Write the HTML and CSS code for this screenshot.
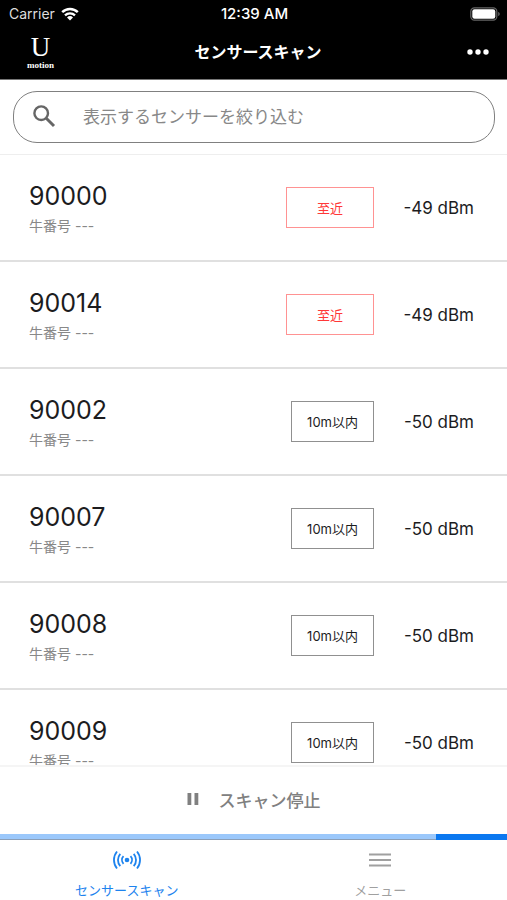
FILE: index.html
```html
<!DOCTYPE html>
<html lang="ja">
<head>
<meta charset="utf-8">
<meta name="viewport" content="width=device-width, initial-scale=1">
<title>センサースキャン</title>
<link rel="stylesheet" href="styles.css">
</head>
<body>
<div class="app">
  <header class="header">
    <div class="status">
      <div class="carrier">
        <span>Carrier</span>
        <svg class="wifi" viewBox="0 0 18 14" aria-hidden="true">
          <path d="M1.2 5.2a11.2 11.2 0 0 1 15.6 0" fill="none" stroke="currentColor" stroke-width="2.5"/>
          <path d="M4 8.3a7.2 7.2 0 0 1 10 0" fill="none" stroke="currentColor" stroke-width="2.3"/>
          <path d="M9 13.6 6 10.5a4.3 4.3 0 0 1 6 0z" fill="currentColor"/>
        </svg>
      </div>
      <span class="time">12:39 AM</span>
      <svg class="battery" viewBox="0 0 30 14" aria-hidden="true">
        <rect x=".8" y=".8" width="26" height="12.4" rx="3.6" fill="none" stroke="#666" stroke-width="1.2"/>
        <rect x="2.3" y="2.2" width="23" height="9.6" rx="2.2" fill="#fff"/>
        <path d="M28.2 5v4c1-.3 1.5-1 1.5-2s-.5-1.7-1.5-2z" fill="#666"/>
      </svg>
    </div>
    <div class="bar">
      <div class="logo"><span class="logo-mark">U</span><span class="logo-name">motion</span></div>
      <h1 class="title">センサースキャン</h1>
      <button class="more" type="button" aria-label="その他">
        <svg viewBox="0 0 22 6" aria-hidden="true"><circle cx="3" cy="3" r="2.7"/><circle cx="11" cy="3" r="2.7"/><circle cx="19" cy="3" r="2.7"/></svg>
      </button>
    </div>
  </header>

  <div class="search-area">
    <label class="search">
      <svg class="search-icon" viewBox="0 0 24 24" aria-hidden="true">
        <circle cx="8.2" cy="8.2" r="6.8" fill="none" stroke="currentColor" stroke-width="2.4"/>
        <path d="M13 13l8 8" stroke="currentColor" stroke-width="3"/>
      </svg>
      <input type="text" placeholder="表示するセンサーを絞り込む" aria-label="表示するセンサーを絞り込む">
    </label>
  </div>

  <ul class="list">
    <li class="row"><div class="sensor"><span class="id">90000</span><span class="cow">牛番号 ---</span></div><span class="range near">至近</span><span class="signal">-49 dBm</span></li>
    <li class="row"><div class="sensor"><span class="id">90014</span><span class="cow">牛番号 ---</span></div><span class="range near">至近</span><span class="signal">-49 dBm</span></li>
    <li class="row"><div class="sensor"><span class="id">90002</span><span class="cow">牛番号 ---</span></div><span class="range">10m以内</span><span class="signal">-50 dBm</span></li>
    <li class="row"><div class="sensor"><span class="id">90007</span><span class="cow">牛番号 ---</span></div><span class="range">10m以内</span><span class="signal">-50 dBm</span></li>
    <li class="row"><div class="sensor"><span class="id">90008</span><span class="cow">牛番号 ---</span></div><span class="range">10m以内</span><span class="signal">-50 dBm</span></li>
    <li class="row"><div class="sensor"><span class="id">90009</span><span class="cow">牛番号 ---</span></div><span class="range">10m以内</span><span class="signal">-50 dBm</span></li>
  </ul>

  <button class="scan" type="button">
    <svg class="pause" viewBox="0 0 12 12" aria-hidden="true"><path d="M.5 0h3.8v12H.5zM7.500 0h3.800v12H7.500z"/></svg>
    <span>スキャン停止</span>
  </button>
  <div class="progress"><div class="progress-value"></div></div>

  <nav class="tabs">
    <a class="tab active" href="#scan" aria-current="page">
      <svg class="tab-icon" viewBox="0 0 28 20" fill="none" stroke="currentColor" stroke-width="1.8" aria-hidden="true">
        <circle cx="14" cy="10" r="2.3" fill="currentColor" stroke="none"/>
        <path d="M10.500 6.200a5.600 5.600 0 0 0 0 7.600M7.300 3.800a9.400 9.400 0 0 0 0 12.400M4 1.500a13.400 13.400 0 0 0 0 17M17.500 6.200a5.600 5.600 0 0 1 0 7.600M20.700 3.800a9.400 9.400 0 0 1 0 12.400M24 1.500a13.400 13.400 0 0 1 0 17"/>
      </svg>
      <span>センサースキャン</span>
    </a>
    <a class="tab" href="#menu">
      <svg class="tab-icon" viewBox="0 0 28 20" fill="none" stroke="currentColor" stroke-width="2" aria-hidden="true"><path d="M3 4.500h22M3 10h22M3 15.500h22"/></svg>
      <span>メニュー</span>
    </a>
  </nav>
</div>
</body>
</html>
```
FILE: styles.css
```css
* { box-sizing: border-box; }

body {
  margin: 0;
  background: #fff;
  color: #1c1c1e;
  font-family: Inter, "Noto Sans CJK JP", sans-serif;
}

button { border: 0; background: none; padding: 0; font: inherit; color: inherit; }

.app { display: flex; flex-direction: column; height: 100vh; overflow: hidden; }

.header { flex: none; background: #000; color: #fff; border-bottom: 1px solid #777; }

.status {
  display: grid;
  grid-template-columns: 1fr auto 1fr;
  align-items: center;
  height: 27px;
  padding: 0 7px 0 9px;
  font-size: 14px;
}
.carrier { display: flex; align-items: center; gap: 6px; color: #ddd; }
.wifi { width: 18px; height: 14px; color: #fff; }
.time { font-weight: 500; font-size: 15px; }
.battery { width: 30px; height: 14px; justify-self: end; }

.bar {
  display: grid;
  grid-template-columns: 1fr auto 1fr;
  align-items: center;
  height: 52px;
  padding: 0 18px 2px 27px;
}
.logo {
  display: flex;
  flex-direction: column;
  align-items: center;
  justify-self: start;
  font-family: "Liberation Serif", serif;
  font-weight: 700;
}
.logo-mark { font-size: 27px; line-height: 26px; font-weight: 400; }
.logo-name { font-size: 9px; line-height: 10px; }
.title { margin: 0; font-size: 16px; line-height: 24px; font-weight: 600; }
.more { justify-self: end; display: flex; }
.more svg { width: 22px; height: 6px; fill: #fff; }

.search-area { flex: none; padding: 11px 12px 11px 13px; border-bottom: 1px solid #eee; }
.search {
  display: flex;
  align-items: center;
  gap: 26px;
  height: 52px;
  padding: 0 19px;
  border: 1px solid #808080;
  border-radius: 24px;
}
.search-icon { flex: none; width: 24px; height: 24px; color: #666; }
.search input {
  flex: 1;
  min-width: 0;
  padding: 0;
  border: 0;
  outline: 0;
  background: none;
  font: inherit;
  font-size: 17px;
}
.search input::placeholder { color: #888; opacity: 1; }

.list { flex: 1; min-height: 0; margin: 0; padding: 0; list-style: none; overflow: hidden; }
.row {
  display: flex;
  align-items: center;
  height: 107px;
  padding: 0 33px 0 29px;
  border-bottom: 2px solid #e0e0e0;
}
.sensor { display: flex; flex-direction: column; gap: 4px; flex: 1; }
.id { font-size: 25px; line-height: 32px; }
.cow { font-size: 14px; line-height: 20px; color: #888; }
.range {
  display: flex;
  align-items: center;
  justify-content: center;
  height: 41px;
  padding: 0 15px;
  border: 1px solid #909090;
  font-size: 13px;
}
.range.near { padding: 0 30px; border-color: #ff9292; color: #ff3838; }
.signal { min-width: 100px; text-align: right; font-size: 17px; }

.scan {
  flex: none;
  display: flex;
  align-items: center;
  justify-content: center;
  gap: 20px;
  height: 69px;
  padding-bottom: 3px;
  border-top: 2px solid #f5f5f5;
  background: #fff;
  color: #808080;
  font-size: 17px;
  font-weight: 500;
}
.pause { width: 12px; height: 12px; fill: currentColor; }

.progress { flex: none; height: 6px; background: #9bc8fb; border-bottom: 1px solid #8b9fb8; }
.progress-value { width: 14%; height: 6px; margin-left: auto; background: #0b78f0; }

.tabs { flex: none; display: flex; height: 60px; }
.tab {
  flex: 1;
  display: flex;
  flex-direction: column;
  align-items: center;
  gap: 10px;
  padding-top: 10px;
  color: #a0a0a0;
  font-size: 13px;
  line-height: 20px;
  text-decoration: none;
}
.tab.active { color: #1d83ee; }
.tab-icon { width: 28px; height: 20px; }
```
